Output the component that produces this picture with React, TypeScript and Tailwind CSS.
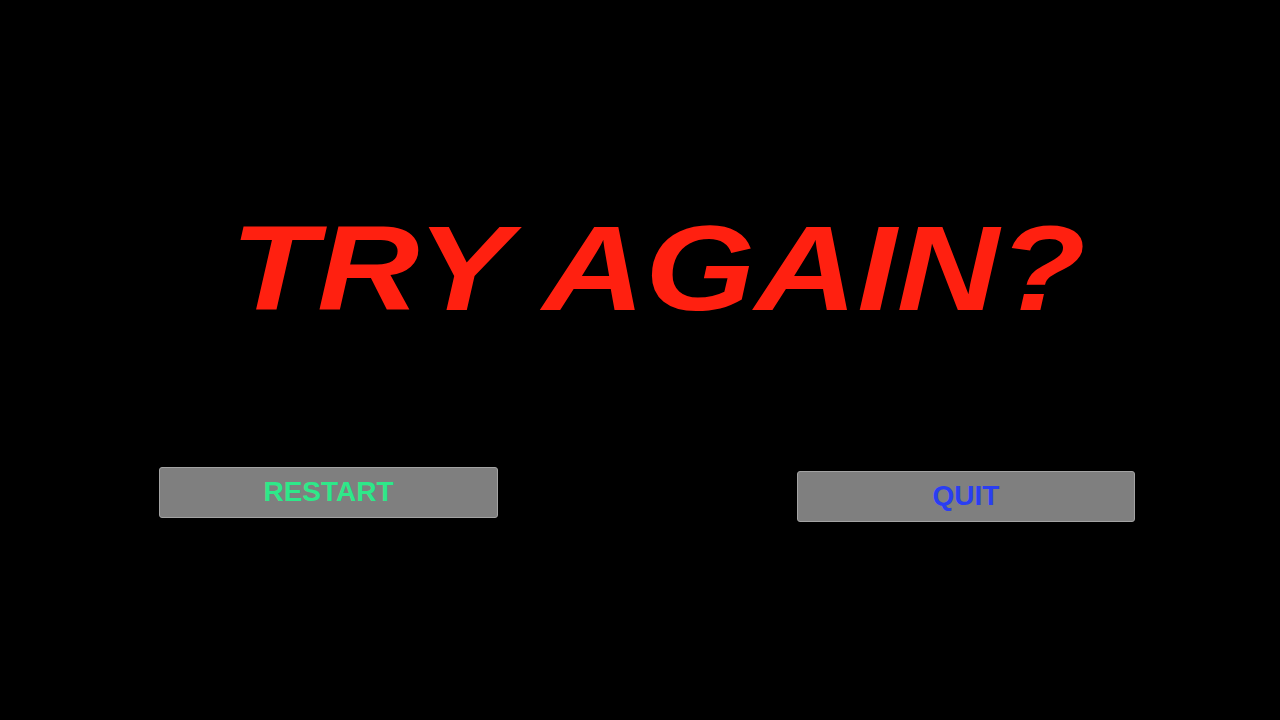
export default function App() {
  return (
    <div className="w-[1280px] h-[720px] bg-black overflow-hidden font-['Liberation_Sans',Arial,sans-serif]">
      {/* Heading */}
      <div className="pt-[208px] flex justify-center">
        <h1 className="text-[120px] leading-none font-bold italic text-[#ff2010] pl-[30px] scale-x-[1.18]">
          TRY AGAIN?
        </h1>
      </div>

      {/* Actions */}
      <div className="flex items-start pl-[159px] mt-[139px]">
        <button className="w-[339px] h-[51px] bg-[#7f7f7f] border border-[#a3a3a3] rounded-[3px] text-[28px] font-bold text-[#2ee889] leading-none flex items-center justify-center pb-[2px]">
          RESTART
        </button>
        <button className="w-[338px] h-[51px] ml-[299px] mt-[4px] bg-[#7f7f7f] border border-[#a3a3a3] rounded-[3px] text-[28px] font-bold text-[#2a3ef2] leading-none flex items-center justify-center pb-[2px]">
          QUIT
        </button>
      </div>
    </div>
  );
}
